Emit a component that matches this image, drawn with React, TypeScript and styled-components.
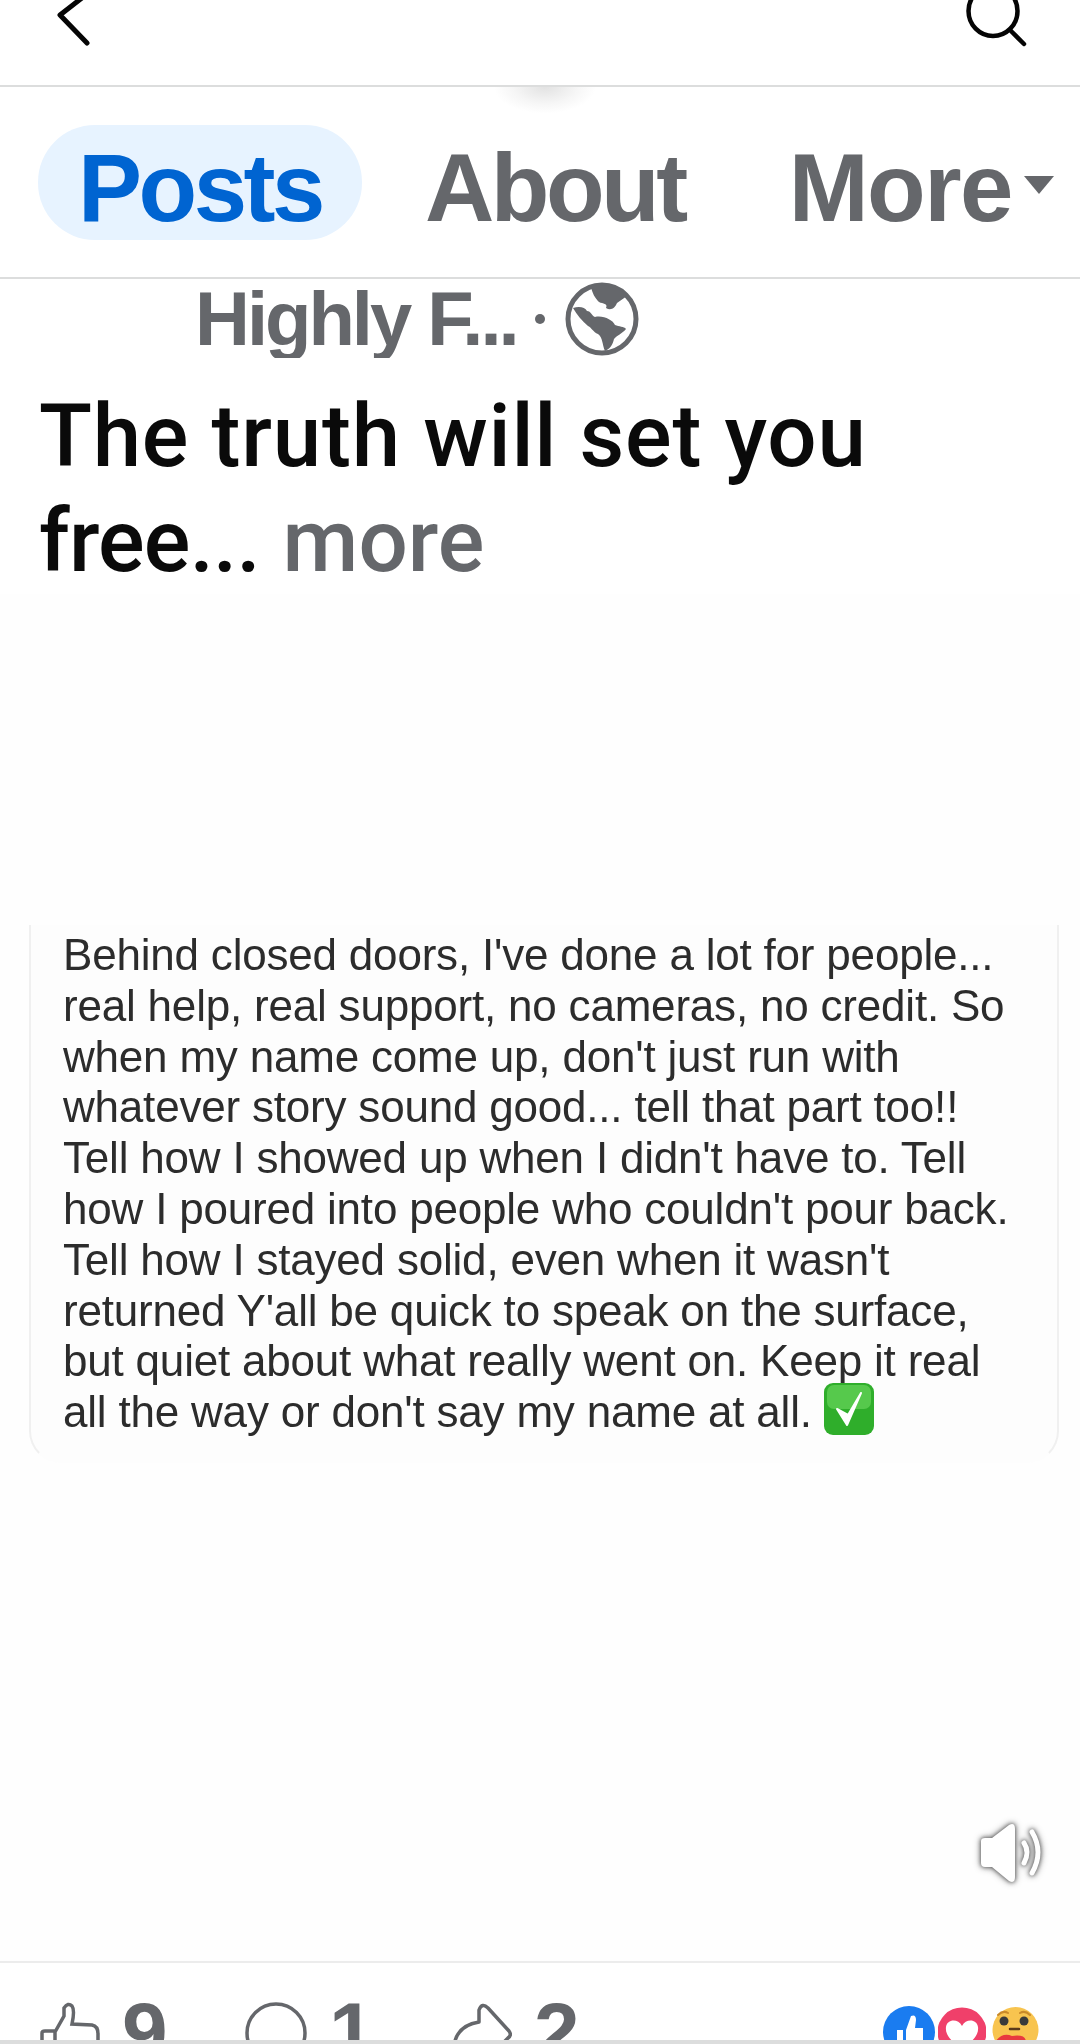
import React from 'react';
import styled, { createGlobalStyle } from 'styled-components';

const GlobalStyle = createGlobalStyle`
  html, body {
    margin: 0;
    padding: 0;
    background: #fff;
  }
`;

const Page = styled.div`
  position: relative;
  display: flex;
  flex-direction: column;
  width: 1080px;
  height: 2044px;
  overflow: hidden;
  background: #fefefe;
  font-family: "Liberation Sans", Arial, sans-serif;
`;

const TopBar = styled.header`
  display: flex;
  justify-content: space-between;
  flex: none;
  height: 85px;
  padding: 0 52px 0 57px;
  background: #fff;
`;

const Tabs = styled.nav`
  position: relative;
  display: flex;
  align-items: center;
  flex: none;
  height: 190px;
  padding: 0 0 0 38px;
  background: #fff;
  border-top: 2px solid #dcdddd;
  border-bottom: 2px solid #dcdddd;
`;

const PullShadow = styled.div`
  position: absolute;
  top: 0;
  left: 495px;
  width: 100px;
  height: 26px;
  background: radial-gradient(ellipse at 50% 0, #e2e2e2 0%, rgba(240, 240, 240, 0.6) 45%, rgba(255, 255, 255, 0) 72%);
`;

const Tab = styled.div<{ $active?: boolean; $gap: number; $spacing: number }>`
  display: flex;
  align-items: center;
  box-sizing: border-box;
  height: 115px;
  margin-right: ${props => props.$gap}px;
  padding: 12px ${props => (props.$active ? 40 : 0)}px 0 ${props => (props.$active ? 40 : 0)}px;
  border-radius: 57px;
  background: ${props => (props.$active ? '#e7f3ff' : 'transparent')};
  color: ${props => (props.$active ? '#0064d1' : '#65676b')};
  font-size: 96px;
  font-weight: 700;
  letter-spacing: ${props => props.$spacing}px;
`;

const Caret = styled.div`
  width: 0;
  height: 0;
  margin: 6px 0 0 12px;
  border-left: 15px solid transparent;
  border-right: 15px solid transparent;
  border-top: 18px solid #65676b;
`;

const MetaRow = styled.div`
  display: flex;
  align-items: center;
  flex: none;
  height: 79px;
  padding-left: 195px;
  background: #fff;
  color: #65676b;
  font-size: 76px;
  font-weight: 700;
  letter-spacing: -3px;
`;

const MetaDot = styled.span`
  width: 10px;
  height: 10px;
  margin: 0 20px 0 18px;
  border-radius: 50%;
  background: #65676b;
`;

const Caption = styled.div`
  flex: none;
  padding: 26px 0 0 39px;
  background: #fff;
  color: #0a0a0a;
  font-family: Roboto, "Liberation Sans", sans-serif;
  font-size: 87px;
  font-weight: 500;
  line-height: 105px;
`;

const CaptionLine = styled.div<{ $spacing: number }>`
  white-space: nowrap;
  letter-spacing: ${props => props.$spacing}px;
`;

const More = styled.span`
  margin-left: 2px;
  color: #65676b;
  letter-spacing: 0;
`;

const Media = styled.main`
  position: relative;
  flex: 1;
  padding: 331px 21px 0 29px;
`;

const Card = styled.section`
  box-sizing: border-box;
  height: 538px;
  padding: 5px 0 0 32px;
  border: 2px solid #f0f0f0;
  border-top: none;
  border-bottom-color: transparent;
  border-radius: 0 0 32px 32px;
  background: #fdfdfd;
  color: #2c2c2c;
  font-size: 44px;
  line-height: 50.8px;
  letter-spacing: -0.2px;
  filter: blur(0.5px);
`;

const CardLine = styled.div`
  display: flex;
  align-items: center;
  white-space: nowrap;
`;

const SpeakerWrap = styled.div`
  position: absolute;
  right: 35px;
  bottom: 76px;
  width: 68px;
  height: 64px;
  filter: drop-shadow(0 0 2px #555) drop-shadow(0 0 3px #999);
`;

const Footer = styled.footer`
  display: flex;
  align-items: flex-start;
  flex: none;
  box-sizing: border-box;
  height: 79px;
  padding: 39px 41px 0 40px;
  overflow: hidden;
  border-top: 2px solid #ececec;
  background: #fff;
`;

const Stat = styled.div<{ $width: number }>`
  display: flex;
  align-items: flex-start;
  gap: 22px;
  width: ${props => props.$width}px;
  color: #65676b;
  font-size: 82px;
  font-weight: 700;
  line-height: 60px;
`;

const Reactions = styled.div`
  display: flex;
  gap: 3px;
  margin-left: auto;
  padding-top: 4px;
`;

const BottomStrip = styled.div`
  flex: none;
  height: 4px;
  background: #dcdddd;
`;

const IconSvg = styled.svg`
  display: block;
  flex: none;
`;

const EmojiSvg = styled(IconSvg)`
  margin: -8px 0 0 11px;
`;

const CareSvg = styled(IconSvg)`
  margin-left: 3px;
`;

const ChevronIcon = () => (
  <IconSvg width="36" height="48" viewBox="0 0 36 48" fill="none">
    <path d="M30 -6 L3 15 L30 43" stroke="#050505" strokeWidth="5" strokeLinecap="round" strokeLinejoin="round" />
  </IconSvg>
);

const SearchIcon = () => (
  <IconSvg width="62" height="48" viewBox="0 0 62 48" fill="none">
    <ellipse cx="27" cy="11" rx="24.5" ry="25" stroke="#050505" strokeWidth="4.5" />
    <path d="M44 30 L58 44" stroke="#050505" strokeWidth="4.5" strokeLinecap="round" />
  </IconSvg>
);

const GlobeIcon = () => (
  <IconSvg width="74" height="74" viewBox="0 0 74 74">
    <circle cx="37" cy="37" r="34" fill="#fff" stroke="#65676b" strokeWidth="5" />
    <path d="M26 4 C38 1 54 5 62 14 L52 21 C50 26 46 29 41 26 C43 21 38 22 34 20 C30 16 27 11 26 4 Z" fill="#65676b" />
    <path
      d="M8 26 C14 24 20 25 22 29 C26 29 27 34 30 35 C38 33 48 38 50 43 C54 45 59 44 61 47 C57 52 52 53 49 57 C48 62 45 67 40 69 C37 62 38 56 33 52 C28 50 27 46 23 44 C17 39 12 33 8 26 Z"
      fill="#65676b"
    />
  </IconSvg>
);

const CheckEmoji = () => (
  <EmojiSvg width="52" height="54" viewBox="0 0 52 54">
    <rect x="1" y="1" width="50" height="52" rx="9" fill="#2fae2b" />
    <rect x="4" y="3" width="44" height="24" rx="7" fill="#56c94c" />
    <path d="M14 27 L24 43 L38 11 L25 33 Z" fill="#fff" stroke="#fff" strokeWidth="2" strokeLinejoin="round" />
  </EmojiSvg>
);

const SpeakerIcon = () => (
  <IconSvg width="68" height="64" viewBox="0 0 68 64" fill="none">
    <path
      d="M4 20 Q4 17 8 17 L15 17 L32 4 Q38 1 38 8 L38 56 Q38 63 32 60 L15 46 L8 46 Q4 46 4 42 Z"
      fill="#fff"
    />
    <path d="M47 22 Q53 31 47 42" stroke="#fff" strokeWidth="5" strokeLinecap="round" />
    <path d="M55 11 Q67 31 55 52" stroke="#fff" strokeWidth="5" strokeLinecap="round" />
  </IconSvg>
);

const ThumbIcon = () => (
  <IconSvg width="60" height="60" viewBox="0 0 60 60" fill="none" stroke="#65676b" strokeWidth="3.5">
    <path d="M15 30 L24 14 L24 6 Q28 0 32 4 Q35 8 32 22 L52 23 Q58 24 58 32 L58 58 L2 58 L2 31 Q2 29 5 29 L15 29 L15 58" />
  </IconSvg>
);

const CommentIcon = () => (
  <IconSvg width="62" height="62" viewBox="0 0 62 62" fill="none" stroke="#65676b" strokeWidth="3.5">
    <circle cx="31" cy="31" r="29" />
  </IconSvg>
);

const ShareIcon = () => (
  <IconSvg width="60" height="60" viewBox="0 0 60 60" fill="none" stroke="#65676b" strokeWidth="3.5" strokeLinejoin="round">
    <path d="M2 44 C4 28 14 22 27 20 L27 8 Q30 0 36 6 L57 29 Q60 33 56 36 L50 42" />
  </IconSvg>
);

const LikeBadge = () => (
  <IconSvg width="52" height="52" viewBox="0 0 52 52">
    <circle cx="26" cy="26" r="26" fill="#1a7cf0" />
    <path d="M14 24 h6 v20 h-6 Z M23 24 L28 10 Q33 8 33 14 L32 22 L40 22 L40 44 L23 44 Z" fill="#fff" />
  </IconSvg>
);

const LoveBadge = () => (
  <IconSvg width="48" height="52" viewBox="0 0 48 52">
    <circle cx="24" cy="26" r="24.5" fill="#f0406a" />
    <path d="M24 44 C12 34 7 28 8 21 C9 13 20 12 24 20 C28 12 39 13 40 21 C41 28 36 34 24 44 Z" fill="#fff" />
  </IconSvg>
);

const CareBadge = () => (
  <CareSvg width="47" height="52" viewBox="0 0 47 52">
    <circle cx="23.5" cy="24" r="23" fill="#f8c44f" />
    <path d="M6 9 Q11 4 16 7 M28 7 Q33 4 38 9" stroke="#c98a2a" strokeWidth="2" fill="none" strokeLinecap="round" />
    <circle cx="12" cy="15" r="4.5" fill="#3a3a3a" />
    <circle cx="32" cy="15" r="4.5" fill="#3a3a3a" />
    <path d="M18 23 h9" stroke="#5a3a1a" strokeWidth="2.5" strokeLinecap="round" />
    <path d="M3 36 Q10 26 20 30 Q34 28 34 36 L32 52 L8 52 Z" fill="#e83a3f" />
  </CareSvg>
);

const postLines = [
  "Behind closed doors, I've done a lot for people...",
  'real help, real support, no cameras, no credit. So',
  "when my name come up, don't just run with",
  'whatever story sound good... tell that part too!!',
  "Tell how I showed up when I didn't have to. Tell",
  "how I poured into people who couldn't pour back.",
  "Tell how I stayed solid, even when it wasn't",
  "returned Y'all be quick to speak on the surface,",
  'but quiet about what really went on. Keep it real',
];

const App: React.FC = () => {
  return (
    <Page>
      <GlobalStyle />
      <TopBar>
        <ChevronIcon />
        <SearchIcon />
      </TopBar>
      <Tabs>
        <PullShadow />
        <Tab $active $gap={63} $spacing={-3.5}>Posts</Tab>
        <Tab $gap={104} $spacing={-3.5}>About</Tab>
        <Tab $gap={0} $spacing={-1.5}>More</Tab>
        <Caret />
      </Tabs>
      <MetaRow>
        Highly F...
        <MetaDot />
        <GlobeIcon />
      </MetaRow>
      <Caption>
        <CaptionLine $spacing={0.75}>The truth will set you</CaptionLine>
        <CaptionLine $spacing={-0.8}>
          free... <More>more</More>
        </CaptionLine>
      </Caption>
      <Media>
        <Card>
          {postLines.map(line => (
            <CardLine key={line}>{line}</CardLine>
          ))}
          <CardLine>
            all the way or don't say my name at all.
            <CheckEmoji />
          </CardLine>
        </Card>
        <SpeakerWrap>
          <SpeakerIcon />
        </SpeakerWrap>
      </Media>
      <Footer>
        <Stat $width={205}>
          <ThumbIcon />9
        </Stat>
        <Stat $width={207}>
          <CommentIcon />1
        </Stat>
        <Stat $width={140}>
          <ShareIcon />2
        </Stat>
        <Reactions>
          <LikeBadge />
          <LoveBadge />
          <CareBadge />
        </Reactions>
      </Footer>
      <BottomStrip />
    </Page>
  );
};

export default App;
